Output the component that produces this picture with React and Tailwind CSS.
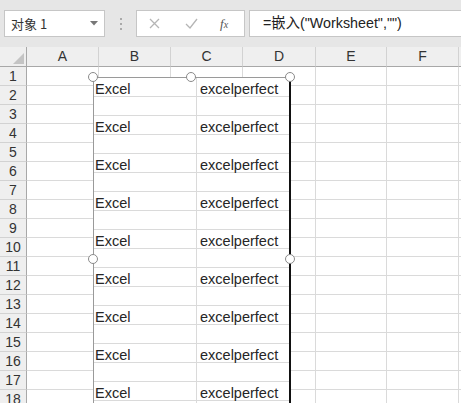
import React from "react";

const cols = [
  { label: "A", w: 72 },
  { label: "B", w: 72 },
  { label: "C", w: 72 },
  { label: "D", w: 73 },
  { label: "E", w: 71 },
  { label: "F", w: 72 },
  { label: "", w: 40 },
];

const rows = Array.from({ length: 18 }, (_, i) => i + 1);
const innerRows = Array.from({ length: 18 }, (_, i) => i);

const Handle = ({ x, y }) => (
  <div
    className="absolute w-[10px] h-[10px] rounded-full border-[1.5px] border-[#8a8a8a] bg-white"
    style={{ left: x - 5, top: y - 5 }}
  />
);

export default function App() {
  return (
    <div className="relative w-[461px] h-[403px] overflow-hidden bg-white font-['Liberation_Sans',sans-serif]">
      {/* formula bar */}
      <div className="flex items-start h-[47px] bg-[#e6e6e6] pt-[10px] pl-[4px]">
        <div className="flex items-center justify-between w-[101px] h-[27px] bg-white border border-[#c6c6c6] pl-[6px] pr-[6px]">
          <span className="text-[13px] text-[#333] font-['Noto_Sans_CJK_SC',sans-serif]">对象 1</span>
          <svg width="8" height="5" viewBox="0 0 8 5">
            <path d="M0 0 L8 0 L4 4.5 Z" fill="#777" />
          </svg>
        </div>
        <div className="flex flex-col items-center justify-center gap-[3px] w-[31px] h-[27px]">
          <span className="w-[2px] h-[2px] bg-[#aaa]" />
          <span className="w-[2px] h-[2px] bg-[#aaa]" />
          <span className="w-[2px] h-[2px] bg-[#aaa]" />
        </div>
        <div className="flex items-center w-[109px] h-[27px] bg-white border border-[#c6c6c6] pl-[12px]">
          <svg width="11" height="11" viewBox="0 0 11 11">
            <path d="M1 1 L10 10 M10 1 L1 10" stroke="#b5b5b5" strokeWidth="1.3" />
          </svg>
          <svg width="13" height="11" viewBox="0 0 13 11" className="ml-[25px]">
            <path d="M1 6 L5 10 L12 1" stroke="#b5b5b5" strokeWidth="1.3" fill="none" />
          </svg>
          <span className="ml-[22px] text-[13px] italic text-[#555] font-['Liberation_Serif',serif]">
            f<span className="text-[10px]">x</span>
          </span>
        </div>
        <div className="flex items-center flex-1 h-[27px] ml-[4px] bg-white border border-r-0 border-[#c6c6c6] pl-[13px]">
          <span className="text-[14.3px] text-[#222] font-['Liberation_Sans','Noto_Sans_CJK_SC',sans-serif]">
            =嵌入("Worksheet","")
          </span>
        </div>
      </div>

      {/* column headers */}
      <div className="flex h-[20px]">
        <div className="relative w-[27px] shrink-0 bg-[#efefef] border-r border-b border-[#a8a8a8]">
          <svg width="11" height="11" viewBox="0 0 11 11" className="absolute right-[2px] bottom-[2px]">
            <path d="M11 0 L11 11 L0 11 Z" fill="#c4c4c4" />
          </svg>
        </div>
        {cols.map((c, i) => (
          <div
            key={i}
            className="flex items-center justify-center shrink-0 bg-[#efefef] border-r border-r-[#d2d2d2] border-b border-b-[#a8a8a8] text-[14px] text-[#333]"
            style={{ width: c.w }}
          >
            {c.label}
          </div>
        ))}
      </div>

      {/* rows */}
      {rows.map((r) => (
        <div key={r} className="flex h-[19px]">
          <div className="flex items-center justify-center w-[27px] shrink-0 bg-[#efefef] border-r border-r-[#a8a8a8] border-b border-b-[#d2d2d2] text-[14px] text-[#333]">
            {r}
          </div>
          {cols.map((c, i) => (
            <div
              key={i}
              className="shrink-0 border-r border-b border-[#dadada]"
              style={{ width: c.w }}
            />
          ))}
        </div>
      ))}

      {/* embedded worksheet object */}
      <div className="absolute left-[93px] top-[77px] w-[198px] h-[340px] bg-white border-l border-t border-[#9a9a9a] border-r-2 border-r-[#111]">
        {innerRows.map((i) => (
          <div key={i} className="flex h-[19px] border-b border-[#dadada]">
            <div className="flex items-end w-[103px] shrink-0 border-r border-[#dadada] pl-[1px] text-[14.5px] leading-[14px] text-[#262626]">
              {i % 2 === 0 ? "Excel" : ""}
            </div>
            <div className="flex items-end flex-1 pl-[3px] text-[14.5px] leading-[14px] text-[#262626]">
              {i % 2 === 0 ? "excelperfect" : ""}
            </div>
          </div>
        ))}
      </div>
      <Handle x={93} y={77} />
      <Handle x={191} y={77} />
      <Handle x={290} y={77} />
      <Handle x={93} y={259} />
      <Handle x={290} y={259} />
    </div>
  );
}
